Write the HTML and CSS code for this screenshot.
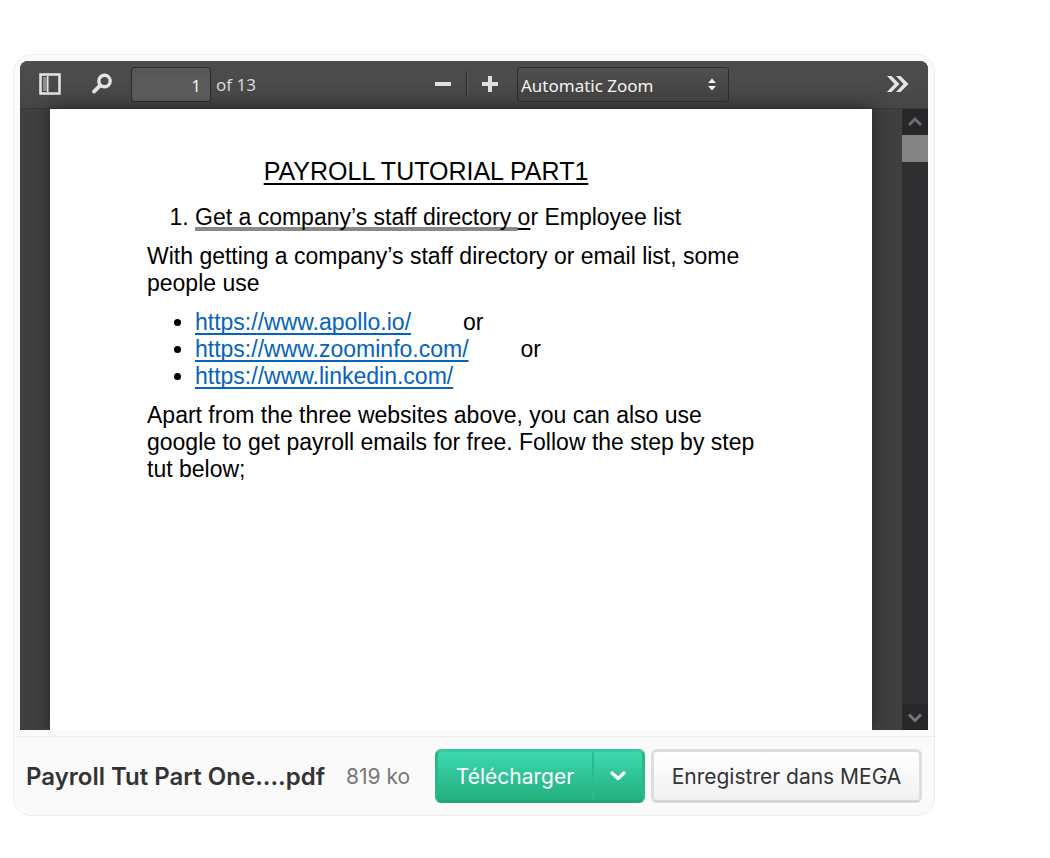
FILE: index.html
```html
<!DOCTYPE html>
<html lang="fr">
<head>
    <meta charset="UTF-8">
    <title>Payroll Tut Part One....pdf</title>
    <link rel="stylesheet" href="styles.css">
</head>
<body>
<div class="card">
    <div class="viewer">
        <div class="toolbar">
            <div class="toolbar-left">
                <button type="button" class="tool" aria-label="Toggle Sidebar">
                    <svg width="22" height="22" viewBox="0 0 22 22">
                        <rect x="1.5" y="1.5" width="19" height="19" fill="none" stroke="#e2e2e2" stroke-width="2.600"/>
                        <rect x="4" y="4" width="4" height="14" fill="#8c8c8c"/>
                        <rect x="8" y="3" width="1.500" height="16" fill="#e2e2e2"/>
                    </svg>
                </button>
                <button type="button" class="tool tool-find" aria-label="Find">
                    <svg width="22" height="22" viewBox="0 0 22 22">
                        <circle cx="13.5" cy="8" r="5.7" fill="none" stroke="#e4e4e4" stroke-width="3.400"/>
                        <path d="M9.2 12.3L3 18.6" stroke="#e4e4e4" stroke-width="3.800" stroke-linecap="round"/>
                    </svg>
                </button>
                <input type="text" class="page-number" id="pageNumber" value="1">
                <label class="page-count" for="pageNumber">of 13</label>
            </div>
            <div class="toolbar-middle">
                <button type="button" class="tool" aria-label="Zoom Out">
                    <svg width="16" height="16" viewBox="0 0 16 16">
                        <rect x="0" y="6" width="16" height="4" fill="#e0e0e0"/>
                    </svg>
                </button>
                <span class="separator"></span>
                <button type="button" class="tool" aria-label="Zoom In">
                    <svg width="16" height="16" viewBox="0 0 16 16">
                        <path d="M0 6h6V0h4v6h6v4H10v6H6V10H0z" fill="#e0e0e0"/>
                    </svg>
                </button>
                <div class="zoom">
                    <select class="zoom-select" aria-label="Zoom">
                        <option>Automatic Zoom</option>
                    </select>
                    <svg class="zoom-arrows" width="8" height="13" viewBox="0 0 8 13">
                        <path d="M0 5L4 0.5L8 5zM0 8L4 12.5L8 8z" fill="#f0f0f0"/>
                    </svg>
                </div>
            </div>
            <div class="toolbar-right">
                <button type="button" class="tool" aria-label="Tools">
                    <svg width="22" height="16" viewBox="0 0 22 16">
                        <path d="M0 0h4.500L12.500 8L4.500 16H0L7.500 8zM9 0h4.500L21.500 8L13.500 16H9L16.500 8z" fill="#e4e4e4"/>
                    </svg>
                </button>
            </div>
        </div>
        <div class="pages">
            <div class="page">
                <h1>PAYROLL TUTORIAL PART1</h1>
                <ol>
                    <li><span class="double">Get a company’s staff directory </span><span class="single">o</span>r Employee list</li>
                </ol>
                <p>With getting a company’s staff directory or email list, some<br>people use</p>
                <ul>
                    <li><a href="https://www.apollo.io/">https://www.apollo.io/</a><span class="tab">or</span></li>
                    <li><a href="https://www.zoominfo.com/">https://www.zoominfo.com/</a><span class="tab">or</span></li>
                    <li><a href="https://www.linkedin.com/">https://www.linkedin.com/</a></li>
                </ul>
                <p>Apart from the three websites above, you can also use<br>google to get payroll emails for free. Follow the step by step<br>tut below;</p>
            </div>
            <div class="scrollbar">
                <button type="button" class="scroll-button" aria-label="Up">
                    <svg width="14" height="12" viewBox="0 0 14 12">
                        <path d="M1 9L7 3L13 9" fill="none" stroke="#6e6e70" stroke-width="3"/>
                    </svg>
                </button>
                <div class="thumb"></div>
                <button type="button" class="scroll-button scroll-down" aria-label="Down">
                    <svg width="14" height="12" viewBox="0 0 14 12">
                        <path d="M1 3.500L7 9.500L13 3.500" fill="none" stroke="#77777a" stroke-width="3"/>
                    </svg>
                </button>
            </div>
        </div>
    </div>
    <div class="footer">
        <span class="file-name">Payroll Tut Part One....pdf</span>
        <span class="file-size">819 ko</span>
        <div class="download">
            <button type="button" class="download-main">Télécharger</button>
            <button type="button" class="download-more" aria-label="Plus d'options">
                <svg width="16" height="10" viewBox="0 0 16 10">
                    <path d="M2 2L8 7.500L14 2" fill="none" stroke="#fff" stroke-width="3.200" stroke-linecap="round" stroke-linejoin="round"/>
                </svg>
            </button>
        </div>
        <button type="button" class="import">Enregistrer dans MEGA</button>
    </div>
</div>
</body>
</html>
```
FILE: styles.css
```css
* {
    box-sizing: border-box;
}
body {
    margin: 0;
    min-height: 100vh;
    padding: 54px 115px 42px 13px;
    display: flex;
    background-color: #fff;
    font-family: Inter, "Liberation Sans", sans-serif;
}
button {
    font-family: inherit;
    cursor: pointer;
}
.card {
    flex: 1;
    display: flex;
    flex-direction: column;
    background-color: #fafafa;
    border: 1px solid #eee;
    border-radius: 18px;
}
.viewer {
    flex: 1;
    display: flex;
    flex-direction: column;
    margin: 6px;
    border-radius: 8px 8px 0 0;
    overflow: hidden;
    background-color: #404040;
}

/* Toolbar */
.toolbar {
    display: flex;
    align-items: center;
    height: 48px;
    padding: 0 19px 1px;
    background: linear-gradient(#4d4d4d, #464646);
    border-bottom: 1px solid #383838;
    font-family: "Noto Sans", sans-serif;
    font-size: 17px;
}
.toolbar-left, .toolbar-middle, .toolbar-right {
    display: flex;
    align-items: center;
}
.toolbar-left {
    flex: 1;
}
.toolbar-right {
    width: 180px;
    justify-content: flex-end;
}
.tool {
    display: flex;
    padding: 0;
    border: none;
    background: none;
}
.tool-find {
    margin: 0 18px 0 30px;
}
.page-number {
    width: 80px;
    height: 35px;
    padding: 2px 9px 0;
    border: 1px solid #2b2b2b;
    border-radius: 3px;
    background: linear-gradient(#565656, #606060);
    color: #f2f2f2;
    font: inherit;
    text-align: right;
}
.page-count {
    margin-left: 5px;
    color: #d9d9d9;
}
.separator {
    width: 2px;
    height: 26px;
    margin: 0 14px 0 15px;
    background-color: #282828;
    border-right: 1px solid #5c5c5c;
}
.zoom {
    position: relative;
    margin-left: 19px;
}
.zoom-select {
    display: block;
    width: 212px;
    height: 35px;
    padding: 2px 3px 0;
    border: 1px solid #2b2b2b;
    border-radius: 3px;
    background: linear-gradient(#505050, #404040);
    color: #f2f2f2;
    font: inherit;
    appearance: none;
}
.zoom-arrows {
    position: absolute;
    top: 11px;
    right: 13px;
    pointer-events: none;
}

/* Pages */
.pages {
    flex: 1;
    display: flex;
    padding-left: 30px;
}
.page {
    flex: 1;
    margin-right: 30px;
    padding: 47px 97px;
    background-color: #fff;
    box-shadow: 0 0 16px #222;
    font-family: "Liberation Sans", Arial, sans-serif;
    font-size: 23px;
    line-height: 27px;
    color: #000;
    white-space: nowrap;
    text-decoration-skip-ink: none;
}
.page h1 {
    margin: 0 0 18px;
    padding-right: 70px;
    font-size: 25px;
    line-height: 30px;
    font-weight: normal;
    text-align: center;
    text-decoration: underline;
    text-decoration-thickness: 2px;
    text-underline-offset: 3px;
}
.page p {
    margin: 0 0 12px;
}
.page ol, .page ul {
    margin: 0 0 12px;
    padding-left: 48px;
}
.page a {
    color: #0563c1;
    text-decoration-thickness: 2px;
    text-underline-offset: 3px;
}
.double {
    white-space: pre;
    text-decoration: underline #8a8a8a 4px;
    text-underline-offset: 2px;
}
.single {
    text-decoration: underline;
    text-underline-offset: 3px;
}
.tab {
    margin-left: 52px;
}
.scrollbar {
    display: flex;
    flex-direction: column;
    width: 26px;
    background-color: #303032;
}
.scroll-button {
    display: flex;
    align-items: center;
    justify-content: center;
    height: 26px;
    padding: 0;
    border: none;
    background-color: #27272a;
}
.scroll-down {
    margin-top: auto;
}
.thumb {
    height: 27px;
    background-color: #838383;
}

/* Footer */
.footer {
    display: flex;
    align-items: center;
    padding: 12px;
    border-top: 1px solid #eee;
    white-space: nowrap;
}
.file-name {
    font-size: 24px;
    font-weight: 600;
    color: #333;
}
.file-size {
    margin-left: 21px;
    font-size: 21px;
    color: #777;
}
.download {
    display: flex;
    height: 54px;
    margin-left: auto;
    border: 3px solid #29b987;
    border-top-color: #35c9a3;
    border-bottom-color: #1fa778;
    border-radius: 6px;
    background: linear-gradient(#3dd8b0, #22b07d);
}
.download-main, .download-more {
    display: flex;
    align-items: center;
    justify-content: center;
    padding: 0;
    border: none;
    background: none;
    color: #fff;
    font-size: 21px;
}
.download-main {
    width: 154px;
}
.download-more {
    width: 50px;
    border-left: 2px solid #2abb8c;
}
.import {
    width: 271px;
    height: 54px;
    margin-left: 6px;
    padding: 0;
    border: 3px solid #dedede;
    border-bottom-color: #d6d6d6;
    border-radius: 6px;
    background: linear-gradient(#fff, #f1f1f1);
    color: #333;
    font-size: 21px;
}
```
